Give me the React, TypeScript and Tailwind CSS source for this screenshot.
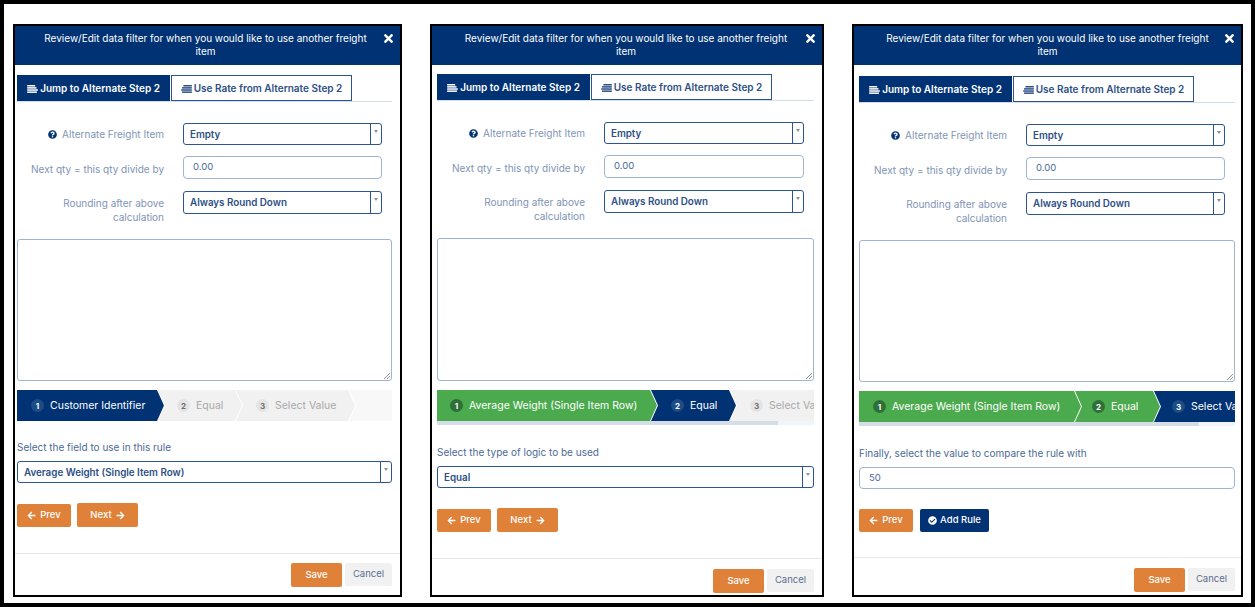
import type { ReactNode } from "react";
import { FaTimes, FaQuestionCircle, FaArrowLeft, FaArrowRight, FaCheckCircle } from "react-icons/fa";

const font = "font-['Inter','Liberation_Sans',sans-serif]";

function ListIcon({ className, flip }: { className: string; flip?: boolean }) {
  return (
    <svg viewBox="0 0 12 9" className={className} fill="currentColor">
      {flip ? (
        <>
          <rect x="2.5" y="0" width="9.5" height="1.7" />
          <rect x="1" y="2.4" width="11" height="1.7" />
          <rect x="0" y="4.8" width="12" height="1.7" />
          <rect x="1" y="7.2" width="11" height="1.7" />
        </>
      ) : (
        <>
          <rect x="0" y="0" width="9" height="1.7" />
          <rect x="0" y="2.4" width="10.5" height="1.7" />
          <rect x="0" y="4.8" width="12" height="1.7" />
          <rect x="0" y="7.2" width="11" height="1.7" />
        </>
      )}
    </svg>
  );
}

function SelectBox({ value, className }: { value: string; className: string }) {
  return (
    <div className={`flex items-stretch border border-[#2b5491] rounded-[3px] bg-white ${className}`}>
      <div className="flex-1 flex items-center pl-1.5 pt-[2px] text-[9.8px] font-semibold text-[#2d4f86]">{value}</div>
      <div className="w-[11px] border-l border-[#2b5491] flex justify-center pt-[6px]">
        <div className="w-0 h-0 border-l-[2px] border-r-[2px] border-t-[3px] border-l-transparent border-r-transparent border-t-[#8a8f98]" />
      </div>
    </div>
  );
}

function TextBox({ value, className }: { value: string; className: string }) {
  return (
    <div className={`flex items-center border border-[#9fb4d2] rounded-[4px] bg-white text-[9.5px] text-[#4b6a96] ${className}`}>
      {value}
    </div>
  );
}

type StepState = "active" | "done" | "todo";

function Step({ n, label, state, className }: { n: number; label: string; state: StepState; className: string }) {
  const bg = state === "active" ? "bg-[#003274] text-white" : state === "done" ? "bg-[#4caa4e] text-white" : "bg-[#f1f1f1] text-[#a9a9a9]";
  const badge = state === "active" ? "bg-[#1d4d85] text-white" : state === "done" ? "bg-[#2f6f3a] text-white" : "bg-[#e4e4e4] text-[#6f6f6f]";
  return (
    <div className={`h-[31px] shrink-0 flex items-center whitespace-nowrap ${bg} ${className}`}>
      <span className={`w-[13px] h-[13px] rounded-full flex items-center justify-center text-[8px] font-bold mr-[6px] ${badge}`}>{n}</span>
      <span className="text-[10.5px]">{label}</span>
    </div>
  );
}

const first = "[clip-path:polygon(0_0,calc(100%-7px)_0,100%_50%,calc(100%-7px)_100%,0_100%)]";
const mid = "[clip-path:polygon(0_0,calc(100%-7px)_0,100%_50%,calc(100%-7px)_100%,0_100%,7px_50%)]";

function Buttons({ last }: { last: "next" | "add" }) {
  return (
    <div className="flex items-center">
      <button className="w-[54px] h-[23px] bg-[#e0813a] text-white text-[9.5px] font-medium rounded-[2px] flex items-center justify-center gap-[4px]">
        <FaArrowLeft className="text-[9px]" /> Prev
      </button>
      {last === "next" ? (
        <button className="ml-[6px] w-[61px] h-[24px] bg-[#e0813a] text-white text-[9.5px] font-medium rounded-[2px] flex items-center justify-center gap-[4px]">
          Next <FaArrowRight className="text-[9px]" />
        </button>
      ) : (
        <button className="ml-[7px] w-[69px] h-[23px] bg-[#003274] text-white text-[9.5px] font-medium rounded-[2px] flex items-center justify-center gap-[3px]">
          <FaCheckCircle className="text-[9px]" /> Add Rule
        </button>
      )}
    </div>
  );
}

type PanelProps = {
  shell: string;
  titlePad: string;
  body: string;
  labelW: string;
  textareaH: string;
  stepsBlock: ReactNode;
  labelGap: string;
  labelText: string;
  control: ReactNode;
  last: "next" | "add";
  footerPad: string;
};

function Panel(p: PanelProps) {
  return (
    <div className={`border-2 border-black bg-white flex flex-col h-[573px] shrink-0 ${p.shell}`}>
      <div className="h-[39px] bg-[#003274] flex items-start text-white shrink-0">
        <div className={`flex-1 text-center text-[10px] leading-[13px] pt-[6px] ${p.titlePad}`}>
          Review/Edit data filter for when you would like to use another freight item
        </div>
        <FaTimes className="text-[13px] mt-[6px] ml-[11px] mr-[5px] shrink-0" />
      </div>
      <div className={`flex flex-col flex-1 ${p.body}`}>
        <div className="flex items-end border-b border-[#d3dceb] h-[27px]">
          <div className="w-[153px] h-[26px] pt-px bg-[#003274] text-white flex items-center justify-center gap-[2px] text-[10px] font-semibold">
            <ListIcon className="w-[11px] h-[8px]" /> Jump to Alternate Step 2
          </div>
          <div className="ml-[1px] w-[181px] h-[26px] pt-px border border-[#2b5491] bg-white text-[#2d4f86] flex items-center justify-center gap-[2px] text-[10px] font-semibold">
            <ListIcon flip className="w-[11px] h-[8px]" /> Use Rate from Alternate Step 2
          </div>
        </div>
        <div className="grid grid-cols-[auto_1fr] gap-y-[11px] mt-[21px] pr-[10px]">
          <div className={`flex items-center justify-end gap-[5px] text-[10px] text-[#7f94b5] h-[22px] ${p.labelW}`}>
            <FaQuestionCircle className="text-[9px] text-[#003274]" /> Alternate Freight Item
          </div>
          <SelectBox value="Empty" className="h-[22px] ml-[19px]" />
          <div className="flex items-center justify-end pt-[4px] text-[10px] text-[#7f94b5] h-[23px]">Next qty = this qty divide by</div>
          <TextBox value="0.00" className="h-[23px] ml-[19px] pl-[9px]" />
          <div className="text-right text-[10px] leading-[14px] text-[#7f94b5] pt-[5px] mt-px">
            Rounding after above
            <br />
            calculation
          </div>
          <SelectBox value="Always Round Down" className="h-[23px] ml-[19px] mt-px" />
        </div>
        <div className={`border border-[#9fb4d2] rounded-[3px] relative mt-[15px] shrink-0 ${p.textareaH}`}>
          <svg viewBox="0 0 7 7" className="absolute right-px bottom-px w-[7px] h-[7px] text-[#777]" stroke="currentColor" strokeWidth="0.8">
            <path d="M1 7L7 1M4 7L7 4" />
          </svg>
        </div>
        {p.stepsBlock}
        <div className={`text-[10px] text-[#4b6a96] ${p.labelGap}`}>{p.labelText}</div>
        {p.control}
        <div className="mt-[20px]">
          <Buttons last={p.last} />
        </div>
      </div>
      <div className={`border-t border-[#e8e8e8] flex justify-end items-start shrink-0 ${p.footerPad}`}>
        <button className="w-[51px] h-[24px] bg-[#e0813a] text-white text-[9.5px] font-medium rounded-[2px]">Save</button>
        <button className="ml-[3px] w-[47px] h-[23px] bg-[#f1f1f1] text-[#5b6f90] text-[9.5px] rounded-[2px]">Cancel</button>
      </div>
    </div>
  );
}

export default function App() {
  return (
    <div className={`w-[1255px] h-[607px] border-4 border-black bg-white flex items-start pl-[9px] pt-[20px] overflow-hidden ${font}`}>
      <Panel
        shell="w-[389px]"
        titlePad="pl-[25px]"
        body="pl-[2px] pr-[8px] pt-[10px]"
        labelW="w-[147px]"
        textareaH="h-[142px]"
        stepsBlock={
          <div className="flex mt-[9px] overflow-hidden shrink-0">
            <Step n={1} label="Customer Identifier" state="active" className={`w-[147px] pl-[14px] ${first}`} />
            <Step n={2} label="Equal" state="todo" className={`w-[84px] -ml-[6px] pl-[19px] ${mid}`} />
            <Step n={3} label="Select Value" state="todo" className={`w-[119px] -ml-[6px] pl-[20px] ${mid}`} />
            <div className="flex-1 -ml-[6px] h-[31px] bg-[#f8f8f8] [clip-path:polygon(0_0,100%_0,100%_100%,0_100%,7px_50%)]" />
          </div>
        }
        labelGap="mt-[19px]"
        labelText="Select the field to use in this rule"
        control={<SelectBox value="Average Weight (Single Item Row)" className="h-[22px] mt-[6px] shrink-0" />}
        last="next"
        footerPad="pt-[9px] pr-[8px] h-[42px]"
      />
      <div className="w-[28px] shrink-0" />
      <Panel
        shell="w-[394px]"
        titlePad="pl-[27px]"
        body="pl-[5px] pr-[8px] pt-[9px]"
        labelW="w-[148px]"
        textareaH="h-[143px]"
        stepsBlock={
          <div className="mt-[9px] shrink-0">
            <div className="flex overflow-hidden">
              <Step n={1} label="Average Weight (Single Item Row)" state="done" className={`w-[220px] pl-[13px] ${first}`} />
              <Step n={2} label="Equal" state="active" className={`w-[85px] -ml-[6px] pl-[20px] ${mid}`} />
              <Step n={3} label="Select Value" state="todo" className={`w-[118px] -ml-[6px] pl-[20px] ${mid}`} />
            </div>
            <div className="h-[4px] bg-[#f1f4f8]">
              <div className="h-full w-[341px] bg-[#d5dde6]" />
            </div>
          </div>
        }
        labelGap="mt-[20px]"
        labelText="Select the type of logic to be used"
        control={<SelectBox value="Equal" className="h-[22px] mt-[6px] shrink-0" />}
        last="next"
        footerPad="pt-[10px] pr-[8px] h-[37px]"
      />
      <div className="w-[28px] shrink-0" />
      <Panel
        shell="w-[391px]"
        titlePad="pl-[29px]"
        body="pl-[5px] pr-[6px] pt-[11px]"
        labelW="w-[148px]"
        textareaH="h-[142px]"
        stepsBlock={
          <div className="mt-[9px] shrink-0">
            <div className="flex overflow-hidden">
              <Step n={1} label="Average Weight (Single Item Row)" state="done" className={`w-[222px] pl-[14px] ${first}`} />
              <Step n={2} label="Equal" state="done" className={`w-[85px] -ml-[6px] pl-[17px] ${mid}`} />
              <Step n={3} label="Select Value" state="active" className={`w-[118px] -ml-[6px] pl-[18px] ${mid}`} />
            </div>
            <div className="h-[4px] bg-[#f1f4f8]">
              <div className="h-full w-[340px] bg-[#d5dde6]" />
            </div>
          </div>
        }
        labelGap="mt-[20px]"
        labelText="Finally, select the value to compare the rule with"
        control={<TextBox value="50" className="h-[22px] mt-[6px] pl-[9px] shrink-0" />}
        last="add"
        footerPad="pt-[10px] pr-[6px] h-[38px]"
      />
    </div>
  );
}
